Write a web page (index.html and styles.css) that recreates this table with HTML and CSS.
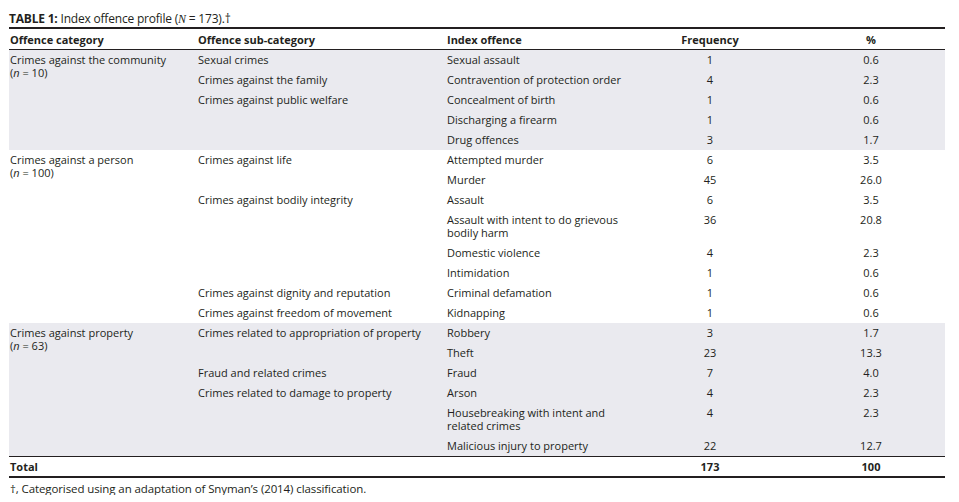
FILE: index.html
```html
<!DOCTYPE html>
<html>
<head>
<meta charset="utf-8">
<link rel="stylesheet" href="styles.css">
</head>
<body>
<div class="wrap">
  <div class="title"><b>TABLE 1:</b> Index offence profile (<i class="math">N</i> = 173).†</div>
  <table class="tbl">
    <colgroup>
      <col class="c1"><col class="c2"><col class="c3"><col class="c4"><col class="c5">
    </colgroup>
    <thead>
      <tr><th>Offence category</th><th>Offence sub-category</th><th>Index offence</th><th class="num">Frequency</th><th class="num">%</th></tr>
    </thead>
    <tbody class="shade">
      <tr><td rowspan="5">Crimes against the community<br>(<i>n</i> = 10)</td><td>Sexual crimes</td><td>Sexual assault</td><td class="num">1</td><td class="num">0.6</td></tr>
      <tr><td>Crimes against the family</td><td>Contravention of protection order</td><td class="num">4</td><td class="num">2.3</td></tr>
      <tr><td rowspan="3">Crimes against public welfare</td><td>Concealment of birth</td><td class="num">1</td><td class="num">0.6</td></tr>
      <tr><td>Discharging a firearm</td><td class="num">1</td><td class="num">0.6</td></tr>
      <tr><td>Drug offences</td><td class="num">3</td><td class="num">1.7</td></tr>
    </tbody>
    <tbody>
      <tr><td rowspan="8">Crimes against a person<br>(<i>n</i> = 100)</td><td rowspan="2">Crimes against life</td><td>Attempted murder</td><td class="num">6</td><td class="num">3.5</td></tr>
      <tr><td>Murder</td><td class="num">45</td><td class="num">26.0</td></tr>
      <tr><td rowspan="4">Crimes against bodily integrity</td><td>Assault</td><td class="num">6</td><td class="num">3.5</td></tr>
      <tr><td>Assault with intent to do grievous<br>bodily harm</td><td class="num">36</td><td class="num">20.8</td></tr>
      <tr><td>Domestic violence</td><td class="num">4</td><td class="num">2.3</td></tr>
      <tr><td>Intimidation</td><td class="num">1</td><td class="num">0.6</td></tr>
      <tr><td>Crimes against dignity and reputation</td><td>Criminal defamation</td><td class="num">1</td><td class="num">0.6</td></tr>
      <tr><td>Crimes against freedom of movement</td><td>Kidnapping</td><td class="num">1</td><td class="num">0.6</td></tr>
    </tbody>
    <tbody class="shade">
      <tr><td rowspan="6">Crimes against property<br>(<i>n</i> = 63)</td><td rowspan="2">Crimes related to appropriation of property</td><td>Robbery</td><td class="num">3</td><td class="num">1.7</td></tr>
      <tr><td>Theft</td><td class="num">23</td><td class="num">13.3</td></tr>
      <tr><td>Fraud and related crimes</td><td>Fraud</td><td class="num">7</td><td class="num">4.0</td></tr>
      <tr><td rowspan="3">Crimes related to damage to property</td><td>Arson</td><td class="num">4</td><td class="num">2.3</td></tr>
      <tr><td>Housebreaking with intent and<br>related crimes</td><td class="num">4</td><td class="num">2.3</td></tr>
      <tr><td>Malicious injury to property</td><td class="num">22</td><td class="num">12.7</td></tr>
    </tbody>
    <tfoot>
      <tr><th>Total</th><th></th><th></th><th class="num">173</th><th class="num">100</th></tr>
    </tfoot>
  </table>
  <div class="note">†, Categorised using an adaptation of Snyman’s (2014) classification.</div>
</div>
</body>
</html>
```

FILE: styles.css
```css
html, body {
  margin: 0;
  padding: 0;
  background: #ffffff;
}
body {
  font-family: "Open Sans", "Lato", sans-serif;
  color: #231f20;
}
.wrap {
  padding: 12px 0 0 9px;
  width: 936px;
}
.title {
  font-size: 12px;
  line-height: 14px;
  height: 15px;
  letter-spacing: -0.2px;
}
.title b {
  font-weight: 700;
}
.math {
  font-family: "Liberation Serif", serif;
  font-style: italic;
}
.tbl {
  width: 936px;
  border-collapse: collapse;
  table-layout: fixed;
  font-size: 11px;
  line-height: 13px;
  border-top: 2px solid #231f20;
}
.c1 { width: 188px; }
.c2 { width: 249px; }
.c3 { width: 177px; }
.c4 { width: 174px; }
.c5 { width: 148px; }
.tbl th, .tbl td {
  padding: 3px 1px 4px 1px;
  text-align: left;
  vertical-align: top;
}
.tbl thead th {
  padding: 3.5px 1px 3.5px 1px;
}
.tbl tbody td {
  padding: 2.5px 1px 4.5px 1px;
}
.tbl th {
  font-weight: 700;
}
.tbl thead tr {
  border-bottom: 1px solid #231f20;
}
.tbl .num {
  text-align: center;
}
.shade td {
  background: #eaeaef;
}
.tbl tfoot tr {
  border-top: 1px solid #231f20;
  border-bottom: 2px solid #231f20;
}
.tbl tfoot th {
  padding: 2.5px 1px 3px 1px;
}
.note {
  font-size: 11.5px;
  line-height: 13px;
  padding-top: 4px;
  padding-left: 1px;
  letter-spacing: -0.1px;
}
```
